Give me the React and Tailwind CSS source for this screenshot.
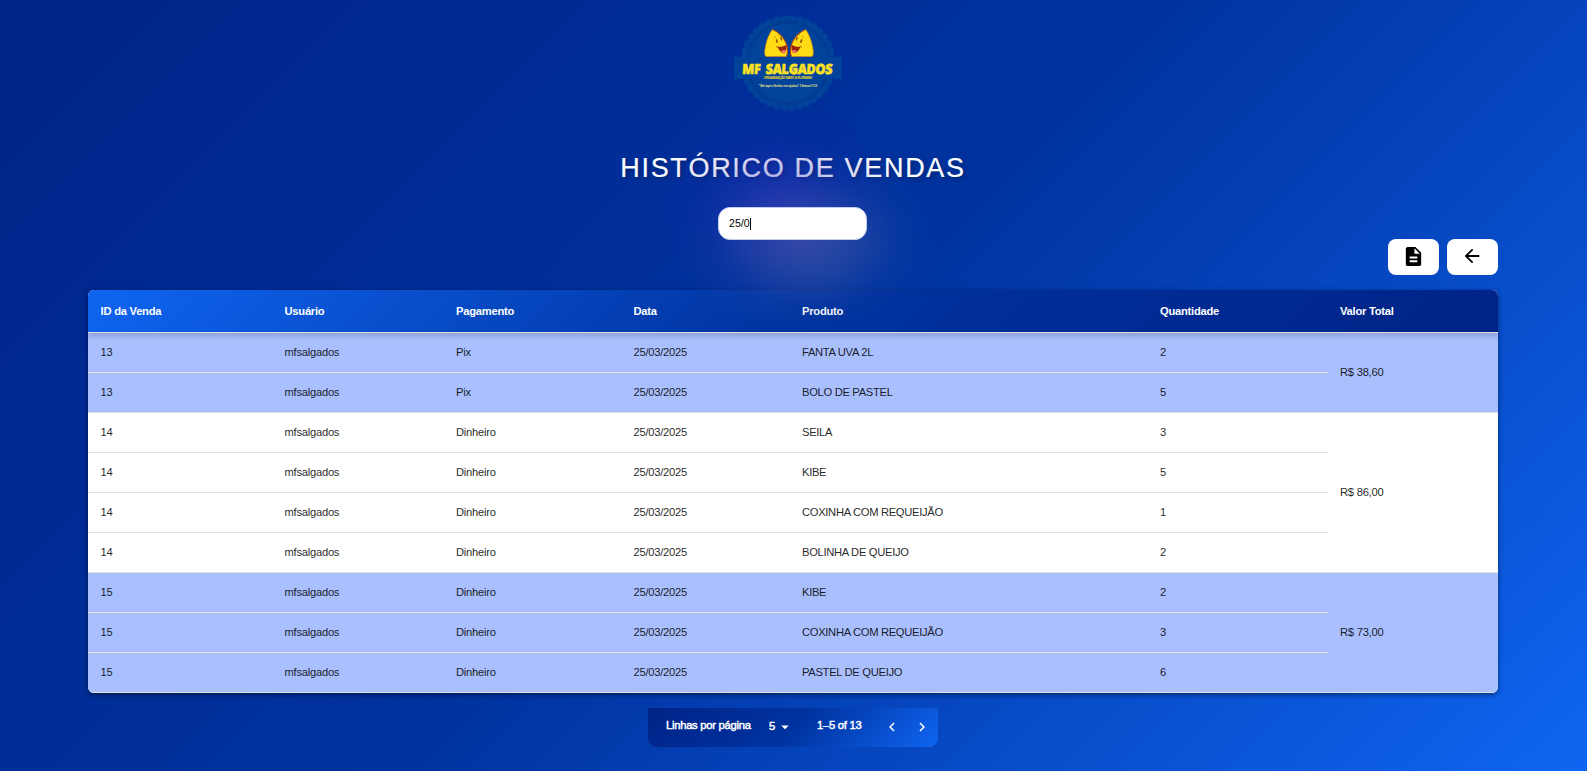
import React from "react";
import {
  MdDescription,
  MdArrowBack,
  MdArrowDropDown,
  MdKeyboardArrowLeft,
  MdKeyboardArrowRight,
} from "react-icons/md";

const columns = ["ID da Venda", "Usuário", "Pagamento", "Data", "Produto", "Quantidade", "Valor Total"];

const sales = [
  {
    id: 13,
    payment: "Pix",
    total: "R$ 38,60",
    items: [["FANTA UVA 2L", 2], ["BOLO DE PASTEL", 5]],
  },
  {
    id: 14,
    payment: "Dinheiro",
    total: "R$ 86,00",
    items: [["SEILA", 3], ["KIBE", 5], ["COXINHA COM REQUEIJÃO", 1], ["BOLINHA DE QUEIJO", 2]],
  },
  {
    id: 15,
    payment: "Dinheiro",
    total: "R$ 73,00",
    items: [["KIBE", 2], ["COXINHA COM REQUEIJÃO", 3], ["PASTEL DE QUEIJO", 6]],
  },
];

// Scalloped outline of the badge
function sealPath(cx, cy, r, bumps) {
  const steps = bumps * 8;
  const pts = [];
  for (let i = 0; i < steps; i++) {
    const a = (i / steps) * Math.PI * 2;
    const rr = r + Math.abs(Math.sin((a * bumps) / 2)) * 2;
    pts.push(`${(cx + rr * Math.cos(a)).toFixed(2)} ${(cy + rr * Math.sin(a)).toFixed(2)}`);
  }
  return `M${pts.join("L")}Z`;
}

function Pastel() {
  return (
    <g>
      <path d="M33 42.5C31.2 41 31.6 37 32.2 34C33.4 27 36 20 39.4 15.6C44.6 17.4 51.4 23.6 53.6 31C54.8 35.4 54.9 40 53.4 42.5Z" fill="#ffdc14" stroke="#d9851a" strokeWidth="0.7" />
      <path d="M39.6 15.6C45.5 18 51.8 24 53.8 31.4C54.9 35.6 54.8 40 53.6 42.3" fill="none" stroke="#a83a1c" strokeWidth="1" />
      <path d="M44.4 32.6C47.6 33.2 50.8 32.6 53.2 30.8C54 35 53 39 50.6 39.2C47.8 39.2 45.8 35.8 44.4 32.6Z" fill="#9a2412" />
      <path d="M48.2 37.4C49.6 35.8 51.8 35.6 53 36.4C52.4 38.6 51.4 39.2 50.4 39.2C49.6 39.1 48.8 38.4 48.2 37.4Z" fill="#f2766a" />
      <ellipse cx="43.8" cy="27" rx="0.9" ry="2.2" fill="#8a4a08" transform="rotate(-18 43.8 27)" />
      <ellipse cx="48.2" cy="24.8" rx="0.8" ry="2.1" fill="#8a4a08" transform="rotate(-18 48.2 24.8)" />
      <path d="M41.4 23.8L43 22.4M45.2 20.8L46.8 20.6" stroke="#b0700c" strokeWidth="0.8" />
      <path d="M43.2 33.4L45 32" stroke="#9a2412" strokeWidth="0.7" />
    </g>
  );
}

function Logo() {
  return (
    <svg width="110" height="98" viewBox="0 0 110 98" className="mr-[11px] block overflow-visible">
      <path d={sealPath(55, 49, 46, 36)} fill="#01429a" />
      <circle cx="55" cy="49" r="40.5" fill="none" stroke="#033a90" strokeWidth="2.2" strokeDasharray="2.6 0.9" />
      <circle cx="55" cy="49" r="42.4" fill="none" stroke="#033a90" strokeWidth="0.5" />
      <rect x="1" y="43" width="108" height="22" fill="#01429a" />
      <Pastel />
      <g transform="matrix(-1 0 0 1 112 0)">
        <Pastel />
      </g>
      <g transform="translate(2.6 0) skewX(-3)" fill="#fbe122" stroke="#fbe122" strokeWidth="0.6" className="font-['Open_Sans',sans-serif] text-[14px] font-extrabold">
        <text x="9.6" y="60.3" textLength="18.2" lengthAdjust="spacingAndGlyphs">MF</text>
        <text x="33" y="60.3" textLength="66.6" lengthAdjust="spacingAndGlyphs">SALGADOS</text>
      </g>
      <text x="31" y="64.8" textLength="48" lengthAdjust="spacingAndGlyphs" fill="#e8d72c" stroke="#e8d72c" strokeWidth="0.1" className="font-['Liberation_Sans',sans-serif] text-[4.4px] font-bold">
        ORGANIZAÇÃO MARY &amp; FLORIANO
      </text>
      <text x="26" y="72.8" textLength="58" lengthAdjust="spacingAndGlyphs" fill="#e6e08a" className="font-['Liberation_Sans',sans-serif] text-[4.4px] font-bold">
        "Até aqui o Senhor nos ajudou" 1 Samuel 7:12
      </text>
    </svg>
  );
}

// Soft two-tone light behind the search field
function HeaderGlow() {
  return (
    <div className="pointer-events-none absolute top-[90px] left-[630px] z-10 h-[242px] w-[320px] bg-[radial-gradient(120px_105px_at_145px_113px,rgba(60,44,200,0.32)_0%,rgba(50,38,195,0.25)_30%,rgba(30,30,185,0.1)_65%,transparent_100%),radial-gradient(130px_92px_at_175px_150px,rgba(110,115,160,0.48)_0%,rgba(95,108,165,0.34)_35%,rgba(60,90,165,0.12)_70%,transparent_100%)]" />
  );
}

export default function App() {
  return (
    <div className="relative flex h-[771px] w-full flex-col items-center overflow-hidden bg-[linear-gradient(135deg,#002387_0%,#0033a0_50%,#0f65f1_100%)] pt-[14px] pr-px font-['Liberation_Sans',Arial,sans-serif] text-[11.2px] tracking-[-0.25px]">
      <Logo />
      <h1 className="mt-[36px] h-[40px] text-[27px] leading-[40px] tracking-[1.68px] whitespace-nowrap text-white [-webkit-text-stroke:0.2px_white] [text-shadow:2px_2px_4px_rgba(0,0,0,0.3)]">
        HISTÓRICO DE VENDAS
      </h1>
      <HeaderGlow />
      <div className="relative z-20 mt-[19px] mr-px flex h-[33px] w-[149px] items-center rounded-[12px] border border-[#c4cdf0] bg-white pl-[10px] text-[10.6px] tracking-normal text-black">
        <span>25/0</span>
        <span className="h-[12px] w-px bg-black" />
      </div>
      <div className="w-[1410px]">
        <div className="-mt-px flex h-[36px] justify-end gap-2">
          <button className="flex h-[36px] w-[51px] items-center justify-center rounded-lg bg-white pb-[2px] text-black">
            <MdDescription size={23} />
          </button>
          <button className="flex h-[36px] w-[51px] items-center justify-center rounded-lg bg-white pr-px pb-[2px] text-black">
            <MdArrowBack size={22} />
          </button>
        </div>
        <div className="mt-[15px] h-[403px] overflow-hidden rounded-[6px] bg-white shadow-[0_2px_4px_rgba(0,0,0,0.35),0_1px_6px_rgba(0,0,0,0.15)]">
          <div className="relative grid h-[43px] grid-cols-[184.5px_171.5px_177.5px_168.5px_358px_180px_170px] items-center border-b border-[#e0e0e0] bg-[linear-gradient(135deg,#0f65f1_0%,#0033a0_50%,#002387_100%)] font-bold text-white shadow-[0_3px_6px_rgba(0,0,0,0.18)]">
            {columns.map((c) => (
              <div key={c} className="pl-3 whitespace-nowrap first:pl-[12.6px]">{c}</div>
            ))}
          </div>
          {sales.map((s, i) => (
            <div key={s.id} className={`flex text-[#000000de] ${i % 2 === 0 ? "bg-[#a9bffe]" : "bg-white"}`}>
              <div className="w-[1240px]">
                {s.items.map(([name, qty]) => (
                  <div key={name} className="grid h-[40px] grid-cols-[184.5px_171.5px_177.5px_168.5px_358px_180px] items-center border-b border-[#e0e0e0]">
                    <div className="pl-[12.6px]">{s.id}</div>
                    <div className="pl-3">mfsalgados</div>
                    <div className="pl-3">{s.payment}</div>
                    <div className="pl-3">25/03/2025</div>
                    <div className="pl-3 tracking-[-0.31px]">{name}</div>
                    <div className="pl-3">{qty}</div>
                  </div>
                ))}
              </div>
              <div className="flex w-[170px] items-center border-b border-[#e0e0e0] pl-3">{s.total}</div>
            </div>
          ))}
        </div>
      </div>
      <div className="mt-[15px] flex h-[39px] w-[290px] items-center rounded-b-[9px] bg-[linear-gradient(135deg,#002387_0%,#0033a0_50%,#0f65f1_100%)] pb-[4px] pl-[18px] text-white [-webkit-text-stroke:0.45px_white]">
        <span className="w-[103px] whitespace-nowrap">Linhas por página</span>
        <span className="w-[7px] pt-px">5</span>
        <MdArrowDropDown size={18} className="mt-[3px]" />
        <span className="ml-[23px] w-[66px] whitespace-nowrap">1–5 of 13</span>
        <MdKeyboardArrowLeft size={18} className="mt-[3px]" />
        <MdKeyboardArrowRight size={18} className="mt-[3px] ml-[12px]" />
      </div>
    </div>
  );
}
